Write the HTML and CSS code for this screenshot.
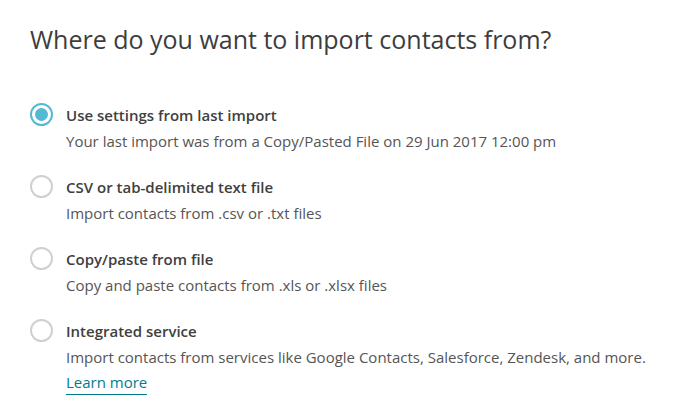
FILE: index.html
```html
<!DOCTYPE html>
<html>
<head>
<meta charset="utf-8">
<link rel="stylesheet" href="styles.css">
</head>
<body>
<div class="page">
  <h1 class="heading">Where do you want to import contacts from?</h1>
  <div class="options">
    <label class="option">
      <span class="radio checked"><span class="dot"></span></span>
      <span class="text">
        <span class="title">Use settings from last import</span>
        <span class="desc">Your last import was from a Copy/Pasted File on 29 Jun 2017 12:00 pm</span>
      </span>
    </label>
    <label class="option">
      <span class="radio"></span>
      <span class="text">
        <span class="title">CSV or tab-delimited text file</span>
        <span class="desc">Import contacts from .csv or .txt files</span>
      </span>
    </label>
    <label class="option">
      <span class="radio"></span>
      <span class="text">
        <span class="title">Copy/paste from file</span>
        <span class="desc">Copy and paste contacts from .xls or .xlsx files</span>
      </span>
    </label>
    <label class="option">
      <span class="radio"></span>
      <span class="text">
        <span class="title">Integrated service</span>
        <span class="desc">Import contacts from services like Google Contacts, Salesforce, Zendesk, and more.</span>
        <a class="link" href="#">Learn more</a>
      </span>
    </label>
  </div>
</div>
</body>
</html>
```

FILE: styles.css
```css
html, body {
  margin: 0;
  padding: 0;
  background: #fff;
}
body {
  font-family: "Open Sans", "DejaVu Sans", sans-serif;
  color: #404040;
}
.page {
  padding: 22px 0 0 30px;
}
.heading {
  margin: 0;
  font-size: 25px;
  font-weight: 400;
  line-height: 34px;
  color: #3d3d3d;
}
.options {
  display: flex;
  flex-direction: column;
  gap: 20px;
  margin-top: 46px;
}
.option {
  display: flex;
  align-items: flex-start;
  gap: 13px;
}
.radio {
  box-sizing: border-box;
  width: 23px;
  height: 23px;
  border-radius: 50%;
  border: 2px solid #d0d0d0;
  display: flex;
  align-items: center;
  justify-content: center;
  flex: none;
  margin-top: 1px;
}
.radio.checked {
  border: 2px solid #52bad5;
}
.radio .dot {
  width: 13px;
  height: 13px;
  border-radius: 50%;
  background: #52bad5;
}
.text {
  display: flex;
  flex-direction: column;
}
.title {
  font-size: 15px;
  font-weight: 600;
  line-height: 26px;
  color: #404040;
}
.desc {
  font-size: 15px;
  line-height: 26px;
  color: #555;
}
.link {
  font-size: 15px;
  line-height: 24px;
  color: #007c89;
  text-decoration: none;
  border-bottom: 1px solid #007c89;
  align-self: flex-start;
}
```
